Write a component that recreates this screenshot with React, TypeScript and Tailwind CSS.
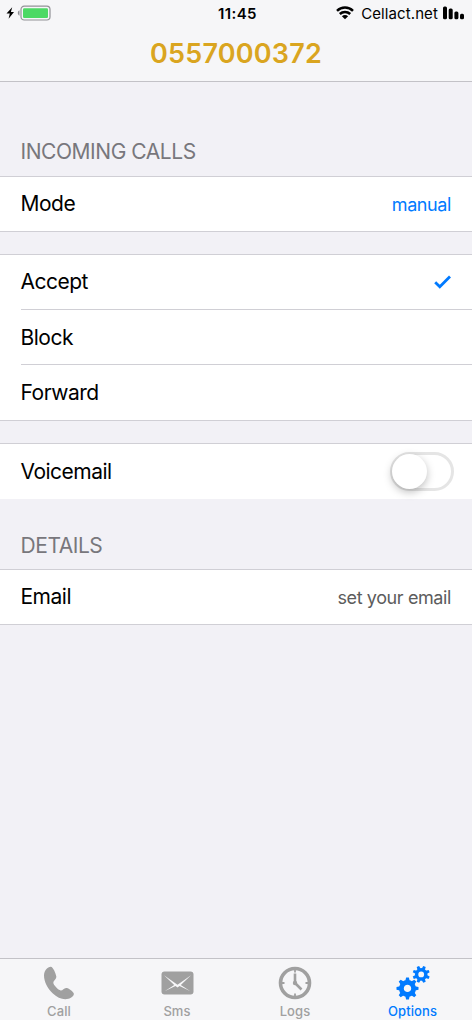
import React from 'react';

interface TabProps {
  label: string;
  active?: boolean;
  children: React.ReactNode;
}

const Tab: React.FC<TabProps> = ({ label, active, children }) => (
  <button className={`flex w-[118px] flex-col items-center pt-[7px] ${active ? 'pr-px text-[#007aff]' : 'text-[#a0a0a0]'}`}>
    <span className="flex h-[34px] items-center justify-center">{children}</span>
    <span className="mt-[3px] text-[13px] leading-4 font-medium tracking-[0.1px]">{label}</span>
  </button>
);

const Group: React.FC<{ children: React.ReactNode }> = ({ children }) => (
  <div className="border-y border-[#d0cfd5] bg-white">{children}</div>
);

interface RowProps {
  label: string;
  className?: string;
  children?: React.ReactNode;
}

const Row: React.FC<RowProps> = ({ label, className = 'h-[54px]', children }) => (
  <div className={`ml-[21px] flex items-center justify-between pr-[21px] ${className}`}>
    <span className="-ml-[0.5px] text-[21px] leading-7 tracking-[-0.5px] text-black">{label}</span>
    {children}
  </div>
);

const SectionTitle: React.FC<{ className: string; children: React.ReactNode }> = ({ className, children }) => (
  <h2 className={`flex items-end pl-[20.5px] text-[21px] leading-7 tracking-[-0.45px] text-[#78777c] ${className}`}>{children}</h2>
);

const StatusBar: React.FC = () => (
  <div className="grid h-[27px] grid-cols-3 items-center px-[6px] text-black">
    <div className="flex items-center pb-px">
      <svg width="9" height="14" viewBox="0 0 9 14" fill="currentColor">
        <path d="M6.200 1.200.5 7.600h3.300L2.600 12.800 8 6.100H4.900z" />
      </svg>
      <svg className="ml-[2px]" width="34" height="16" viewBox="0 0 34 16">
        <path d="M2.500 5.300v5.400C1.400 10.200.8 9.200.8 8s.6-2.200 1.700-2.700z" fill="#8e8e92" />
        <rect x="4" y="1.200" width="29" height="13.800" rx="3.200" fill="none" stroke="#929296" strokeWidth="1.200" />
        <rect x="6" y="3.200" width="25" height="9.800" rx="1.200" fill="#4cd964" />
      </svg>
    </div>
    <span className="pl-[3px] text-center text-[15px] leading-5 font-semibold tracking-[0.4px]">11:45</span>
    <div className="flex items-center justify-end pr-[2px]">
      <svg className="mb-px" width="18" height="14" viewBox="0 0 18 14" fill="none" stroke="currentColor" strokeWidth="2.500">
        <path d="M1 4.800a11.500 11.500 0 0 1 16 0" />
        <path d="M3.800 8a7.500 7.500 0 0 1 10.400 0" />
        <path d="M9 13.300 5.900 10.200a4.400 4.400 0 0 1 6.200 0z" fill="currentColor" stroke="none" />
      </svg>
      <span className="ml-[7px] text-[15px] leading-5 tracking-[0.1px] whitespace-nowrap">Cellact.net</span>
      <svg className="mb-px ml-[5px]" width="21" height="14" viewBox="0 0 21 14" fill="currentColor">
        <rect x="0" y="0.500" width="4" height="12.800" rx="1.500" />
        <rect x="5.700" y="2.500" width="4" height="10.800" rx="1.500" />
        <rect x="11.400" y="5.500" width="4" height="7.800" rx="1.500" />
        <rect x="17" y="7.700" width="4" height="5.600" rx="1.500" />
      </svg>
    </div>
  </div>
);

const PhoneIcon: React.FC = () => (
  <svg width="32" height="34" viewBox="0 0 32 34" fill="currentColor">
    <path d="M7.800.7C5 .5 1 4.200 1 9.500c0 6 3.400 12.800 8.600 17.800 5 4.800 10.600 6.800 15.900 5.500 2.800-.7 5.700-3.400 5.300-5.200-.5-2-4.800-5-6.900-5.600-2.800-.8-4 2.600-6.200 2.400-2.500-.2-7.200-5.300-7.400-7.600-.2-2.200 3.500-3.600 3-6.300C12.800 7.500 10.200.9 7.800.7z" />
  </svg>
);

const MailIcon: React.FC = () => (
  <svg width="33" height="24" viewBox="0 0 33 24">
    <rect x="0.500" y="0.500" width="32" height="23" rx="3" fill="currentColor" />
    <path d="M3 4.300l13.500 9.500L30 4.300 19.800 14.100 29 20l-10.500-5.100-2 1.700-2-1.700L4 20l9.200-5.900z" fill="#f7f7f9" />
  </svg>
);

const ClockIcon: React.FC = () => (
  <svg width="34" height="34" viewBox="0 0 34 34" fill="none" stroke="currentColor">
    <circle cx="17" cy="17" r="14.500" strokeWidth="3.600" />
    <path d="M17 3v3.500M17 27.500V31M3 17h3.500M27.500 17H31" strokeWidth="1.800" />
    <path d="M17 7.500V17l6.500 6.500" strokeWidth="2.600" strokeLinejoin="round" />
    <circle cx="17" cy="17" r="2.200" fill="currentColor" stroke="none" />
  </svg>
);

const GEAR_TEETH = [0, 45, 90, 135, 180, 225, 270, 315];

const GearsIcon: React.FC = () => (
  <svg width="34" height="34" viewBox="0 0 34 34" fill="none" stroke="currentColor">
    <g transform="translate(11.500 22.400)">
      <circle r="6.100" strokeWidth="4.800" />
      {GEAR_TEETH.map((angle) => (
        <path key={angle} d="M-2.200-7.500-1.400-11H1.400L2.200-7.500z" fill="currentColor" stroke="none" transform={`rotate(${angle})`} />
      ))}
    </g>
    <g transform="translate(25.200 8.400)">
      <circle r="4.600" strokeWidth="3.400" />
      {GEAR_TEETH.map((angle) => (
        <path key={angle} d="M-1.700-5.500-1.300-8.600H1.300L1.700-5.500z" fill="currentColor" stroke="none" transform={`rotate(${angle + 22.5})`} />
      ))}
    </g>
  </svg>
);

export default function App() {
  return (
    <div className="flex h-[1024px] w-[472px] flex-col overflow-hidden bg-white font-['Inter','Liberation_Sans',sans-serif]">
      <header className="h-[82px] border-b border-[#c3c2c7] bg-[#f6f6f8]">
        <StatusBar />
        <h1 className="text-center text-[27px] leading-[54px] font-semibold tracking-[0.2px] text-[#daa520]">0557000372</h1>
      </header>

      <main className="flex-1 bg-[#f2f1f6]">
        <SectionTitle className="h-[94px] pb-[10px]">INCOMING CALLS</SectionTitle>
        <Group>
          <Row label="Mode">
            <span className="text-[18px] tracking-[-0.4px] text-[#007aff]">manual</span>
          </Row>
        </Group>

        <div className="mt-[22px]">
          <Group>
            <Row label="Accept">
              <svg width="17" height="14" viewBox="0 0 17 14" fill="none" stroke="#007aff" strokeWidth="2.800">
                <path d="M1.200 7.200 5.800 11.700 16 1.500" />
              </svg>
            </Row>
            <Row label="Block" className="h-[55px] border-t border-[#d0cfd5] pt-px" />
            <Row label="Forward" className="h-[56px] border-t border-[#d0cfd5]" />
          </Group>
        </div>

        <div className="mt-[22px] border-t border-[#d0cfd5] bg-white">
          <Row label="Voicemail" className="h-[55px]">
            <button className="-mr-[3px] flex h-[39px] w-[64px] items-center rounded-full border-3 border-[#e5e5e5] bg-white">
              <span className="-ml-px size-[35px] shrink-0 rounded-full bg-white shadow-[0_3px_9px_rgba(0,0,0,0.26)]" />
            </button>
          </Row>
        </div>

        <SectionTitle className="h-[70px] pb-[9px]">DETAILS</SectionTitle>
        <Group>
          <Row label="Email">
            <span className="text-[18px] tracking-[-0.4px] text-[#5c5c5c]">set your email</span>
          </Row>
        </Group>
      </main>

      <nav className="mb-1 flex h-[62px] border-t border-[#c3c2c7] bg-[#f6f6f8]">
        <Tab label="Call"><PhoneIcon /></Tab>
        <Tab label="Sms"><MailIcon /></Tab>
        <Tab label="Logs"><ClockIcon /></Tab>
        <Tab label="Options" active><GearsIcon /></Tab>
      </nav>
    </div>
  );
}
